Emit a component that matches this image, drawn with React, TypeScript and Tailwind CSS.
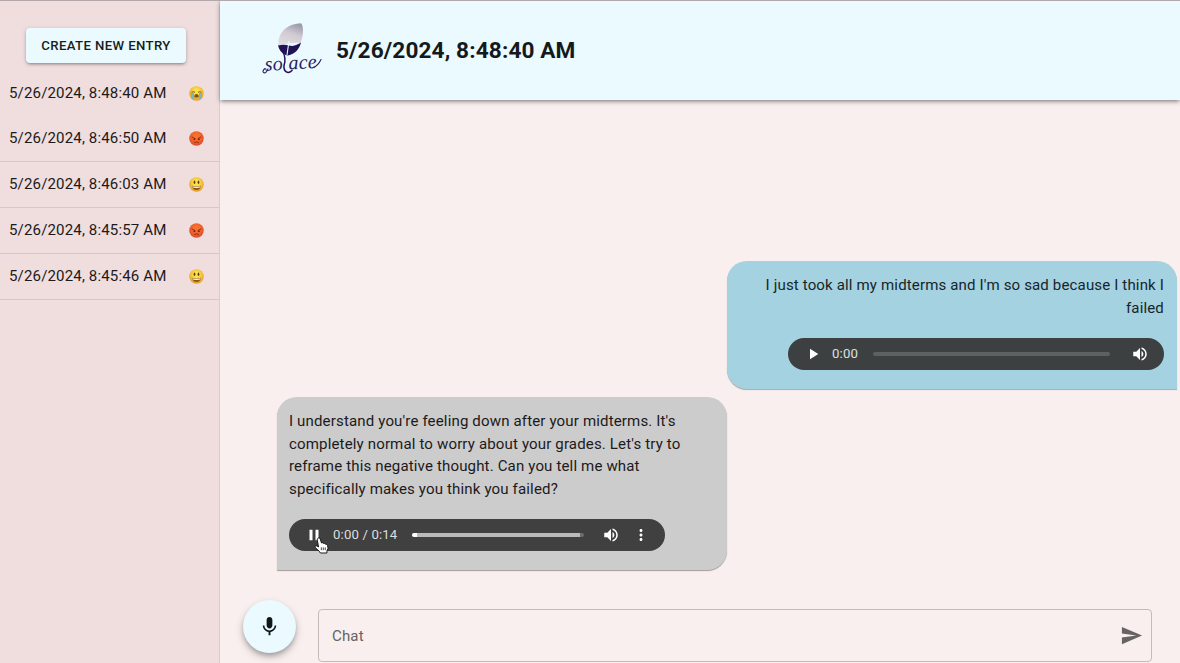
import React from "react";

type Mood = "cry" | "angry" | "happy";

const entries: { time: string; mood: Mood }[] = [
  { time: "5/26/2024, 8:48:40 AM", mood: "cry" },
  { time: "5/26/2024, 8:46:50 AM", mood: "angry" },
  { time: "5/26/2024, 8:46:03 AM", mood: "happy" },
  { time: "5/26/2024, 8:45:57 AM", mood: "angry" },
  { time: "5/26/2024, 8:45:46 AM", mood: "happy" },
];

function MoodIcon({ mood }: { mood: Mood }) {
  const angry = mood === "angry";
  return (
    <svg viewBox="0 0 30 30" className="h-[15px] w-[15px] shrink-0">
      <defs>
        <radialGradient id={`face-${mood}`} cx="50%" cy="38%" r="62%">
          <stop offset="0.3" stopColor={angry ? "#f9702f" : "#fde047"} />
          <stop offset="1" stopColor={angry ? "#dd4a2c" : "#e29a2b"} />
        </radialGradient>
      </defs>
      <circle cx="15" cy="15" r="14.5" fill={`url(#face-${mood})`} />
      {mood === "happy" && (
        <g>
          <ellipse cx="11" cy="10.5" rx="1.7" ry="3.4" fill="#5b3a12" />
          <ellipse cx="19" cy="10.5" rx="1.7" ry="3.4" fill="#5b3a12" />
          <path d="M6 17.5Q15 20 24 17.5Q23 26 15 26Q7 26 6 17.5Z" fill="#8a5a1c" />
          <path d="M7 18.3Q15 20.4 23 18.3L22.4 21.2Q15 22.6 7.6 21.2Z" fill="#fff" />
        </g>
      )}
      {angry && (
        <g stroke="#7d2413" strokeWidth="1.7" fill="none" strokeLinecap="round">
          <path d="M6 12l6 3M24 12l-6 3M11 23q4-3.6 8 0" />
          <circle cx="10.5" cy="16.5" r="1" fill="#65180f" />
          <circle cx="19.5" cy="16.5" r="1" fill="#65180f" />
        </g>
      )}
      {mood === "cry" && (
        <g>
          <path d="M4 14h6v13q-4 0-6-3z" fill="#7fb4bd" />
          <path d="M26 14h-6v13q4 0 6-3z" fill="#7fb4bd" />
          <path d="M5 12.5q3.5-2 7 0M18 12.5q3.5-2 7 0" stroke="#684a18" strokeWidth="1.8" fill="none" />
          <path d="M10.5 22q0-6 4.5-6t4.5 6q-4.5 2-9 0z" fill="#7a5524" />
        </g>
      )}
    </svg>
  );
}

function Logo() {
  return (
    <svg viewBox="0 0 62 56" className="h-14 w-[62px] shrink-0" aria-label="solace">
      <defs>
        <linearGradient id="leaf" x1="0.7" y1="0" x2="0.3" y2="1">
          <stop offset="0" stopColor="#9d99ab" />
          <stop offset="0.45" stopColor="#d0cad2" />
          <stop offset="1" stopColor="#e2dde1" />
        </linearGradient>
      </defs>
      <path d="M17.5 23C16.5 10 25 1 40 .2C43 3 42.5 13 39.5 20Q30 19 17.500 23Z" fill="url(#leaf)" />
      <path d="M17 22.5Q23 21 28 22.5T40 19.5C38.500 26 34 31 27 32.5L24.5 32C20.5 30 18 27 17 22.5Z" fill="#211256" />
      <path d="M28 18L26 32" stroke="#e9f8fd" strokeWidth="1.1" fill="none" />
      <path
        d="M21.5 28Q25.5 35 23 42.5C22.5 49 27 51.500 31 47.5"
        stroke="#211256"
        strokeWidth="1.5"
        fill="none"
        strokeLinecap="round"
      />
      <text
        x="4"
        y="46.5"
        fill="#2c1f60"
        fontSize="20"
        textLength="52"
        lengthAdjust="spacingAndGlyphs"
        fontStyle="italic"
        fontFamily="'Liberation Serif', cursive"
        transform="rotate(-3 30 46)"
      >
        so<tspan fill="none">l</tspan>ace
      </text>
      <path
        d="M7 46Q5 51 2.5 49.5Q1 48 4 45.5M52 44.5Q57 43 60 36.5"
        stroke="#2c1f60"
        strokeWidth="1.1"
        fill="none"
        strokeLinecap="round"
      />
    </svg>
  );
}

function Glyph({ d, className }: { d: string; className: string }) {
  return (
    <svg viewBox="0 0 24 24" fill="currentColor" className={`shrink-0 ${className}`}>
      <path d={d} />
    </svg>
  );
}

const PLAY = "M8 5v14l11-7z";
const PAUSE = "M6 19h4V5H6v14zm8-14v14h4V5h-4z";
const VOLUME =
  "M3 9v6h4l5 5V4L7 9H3zm13.5 3c0-1.77-1.02-3.29-2.5-4.03v8.05c1.48-.73 2.5-2.25 2.5-4.02zM14 3.23v2.06c2.89.86 5 3.54 5 6.71s-2.11 5.85-5 6.71v2.06c4.01-.91 7-4.49 7-8.77s-2.99-7.86-7-8.77z";
const MORE =
  "M12 8c1.1 0 2-.9 2-2s-.9-2-2-2-2 .9-2 2 .9 2 2 2zm0 2c-1.1 0-2 .9-2 2s.9 2 2 2 2-.9 2-2-.9-2-2-2zm0 6c-1.1 0-2 .9-2 2s.9 2 2 2 2-.9 2-2-.9-2-2-2z";
const MIC =
  "M12 14c1.66 0 2.99-1.34 2.99-3L15 5c0-1.66-1.34-3-3-3S9 3.34 9 5v6c0 1.66 1.34 3 3 3zm5.3-3c0 3-2.54 5.1-5.3 5.1S6.7 14 6.7 11H5c0 3.41 2.72 6.23 6 6.72V21h2v-3.28c3.28-.48 6-3.3 6-6.72h-1.7z";
const SEND = "M2.01 21 23 12 2.01 3 2 10l15 2-15 2z";

function HandCursor() {
  return (
    <svg viewBox="0 0 16 18" className="absolute left-[25px] top-[18px] h-[17px] w-[15px]">
      <path
        d="M4.2 1.2C5.2.5 6.2 1 6.6 2L8 6.3Q9.3 5.5 10.2 6.8Q11.6 6.2 12.3 7.7Q14 7.2 14.4 9L15 12L13.8 14.5V17H6.8L5.5 15L1.5 11.3Q.6 9.8 2 9.3Q3 9 4.8 10.6L3.5 3Q3.3 1.7 4.2 1.2Z"
        fill="#fff"
        stroke="#111"
        strokeWidth="1"
      />
      <path d="M7.8 11v3M9.9 11v3M12 11v3" stroke="#222" strokeWidth="0.9" />
    </svg>
  );
}

function UserPlayer() {
  return (
    <div className="flex h-8 w-[376px] items-center rounded-full bg-[#3c4041] pl-4 pr-[15px] text-white">
      <Glyph d={PLAY} className="h-[18px] w-[18px]" />
      <span className="ml-[10px] w-[41px] text-left text-[13.2px] text-[#dce0e1]">0:00</span>
      <div className="h-1 flex-1 rounded-full bg-[#5d6162]" />
      <Glyph d={VOLUME} className="ml-[21px] h-[18px] w-[18px]" />
    </div>
  );
}

function BotPlayer() {
  return (
    <div className="relative flex h-8 w-[376px] items-center rounded-full bg-[#404040] pl-4 pr-[15px] text-white">
      <Glyph d={PAUSE} className="h-[18px] w-[18px]" />
      <span className="ml-[10px] w-[79px] whitespace-nowrap text-[13.2px] text-[#dedede]">0:00 / 0:14</span>
      <div className="flex h-1 flex-1 overflow-hidden rounded-full bg-[#6c6c6c]">
        <div className="w-[5px] bg-white" />
        <div className="w-[163px] bg-[#bababa]" />
      </div>
      <Glyph d={VOLUME} className="ml-[18px] h-[18px] w-[18px]" />
      <Glyph d={MORE} className="ml-3 h-[18px] w-[18px]" />
      <HandCursor />
    </div>
  );
}

export default function App() {
  return (
    <div className="flex h-[663px] w-[1180px] overflow-hidden border-t border-[#b3a7ac] bg-[#f8efee] font-['Roboto',sans-serif] text-[15.06px] tracking-[0.141px] text-[#1c1a1b]">
      <aside className="flex w-[220px] shrink-0 flex-col border-r border-[#ddcccd] bg-[#f0dede] pt-[27px]">
        <button className="ml-[26px] flex h-[35px] w-[160px] items-center justify-center rounded bg-[#eafaff] text-[13.2px] font-medium tracking-[0.376px] text-[#171d20] shadow-[0_2px_3px_-1px_rgba(0,0,0,0.3),0_1px_4px_rgba(0,0,0,0.2)]">
          CREATE NEW ENTRY
        </button>
        <ul className="mt-[7px]">
          {entries.map((e, i) => (
            <li
              key={e.time}
              className={`flex h-[46px] items-center justify-between pl-[9px] pr-[15px] ${
                i === 0 ? "" : "border-b border-[#d6c6c7]"
              }`}
            >
              <span>{e.time}</span>
              <MoodIcon mood={e.mood} />
            </li>
          ))}
        </ul>
      </aside>

      <main className="flex min-w-0 flex-1 flex-col">
        <header className="flex h-[99px] shrink-0 items-center bg-[#eafaff] pl-[41px] shadow-[0_2px_4px_-1px_rgba(0,0,0,0.4),0_1px_6px_rgba(0,0,0,0.2)]">
          <Logo />
          <h1 className="ml-[13px] text-[22.6px] font-bold tracking-[0.13px] text-[#14191c]">
            5/26/2024, 8:48:40 AM
          </h1>
        </header>

        <section className="flex flex-1 flex-col pt-[161px]">
          <div className="mr-[3px] flex h-32 w-[450px] flex-col items-end self-end rounded-[20px] rounded-br-none bg-[#a4d2e0] px-[13px] pt-[13px] text-right leading-[22.6px] text-[#17252b] shadow-[0_1px_1px_rgba(0,0,0,0.3)]">
            <p className="mb-[19px] w-[410px]">I just took all my midterms and I'm so sad because I think I failed</p>
            <UserPlayer />
          </div>
          <div className="ml-[57px] mt-2 flex h-[173px] w-[450px] flex-col rounded-[20px] rounded-bl-none bg-[#cccccc] px-[12px] pt-[13px] leading-[22.6px] shadow-[0_1px_1px_rgba(0,0,0,0.35)]">
            <p className="mb-[19px] w-[400px]">
              I understand you're feeling down after your midterms. It's completely normal to worry about your
              grades. Let's try to reframe this negative thought. Can you tell me what specifically makes you think
              you failed?
            </p>
            <BotPlayer />
          </div>
        </section>

        <footer className="flex h-[63px] shrink-0 items-start pl-[23px] pr-7">
          <button className="flex h-[53px] w-[53px] shrink-0 items-center justify-center rounded-full bg-[#eafaff] text-[#101719] shadow-[0_3px_5px_-1px_rgba(0,0,0,0.24),0_4px_9px_rgba(0,0,0,0.2)]">
            <Glyph d={MIC} className="h-[23px] w-[23px]" />
          </button>
          <div className="ml-[22px] mt-[9px] flex h-[53px] flex-1 items-center justify-between rounded border border-[#c3babb] pl-[13px] pr-[8px] text-[#666362]">
            <span className="pt-px">Chat</span>
            <Glyph d={SEND} className="h-[23px] w-[23px]" />
          </div>
        </footer>
      </main>
    </div>
  );
}
